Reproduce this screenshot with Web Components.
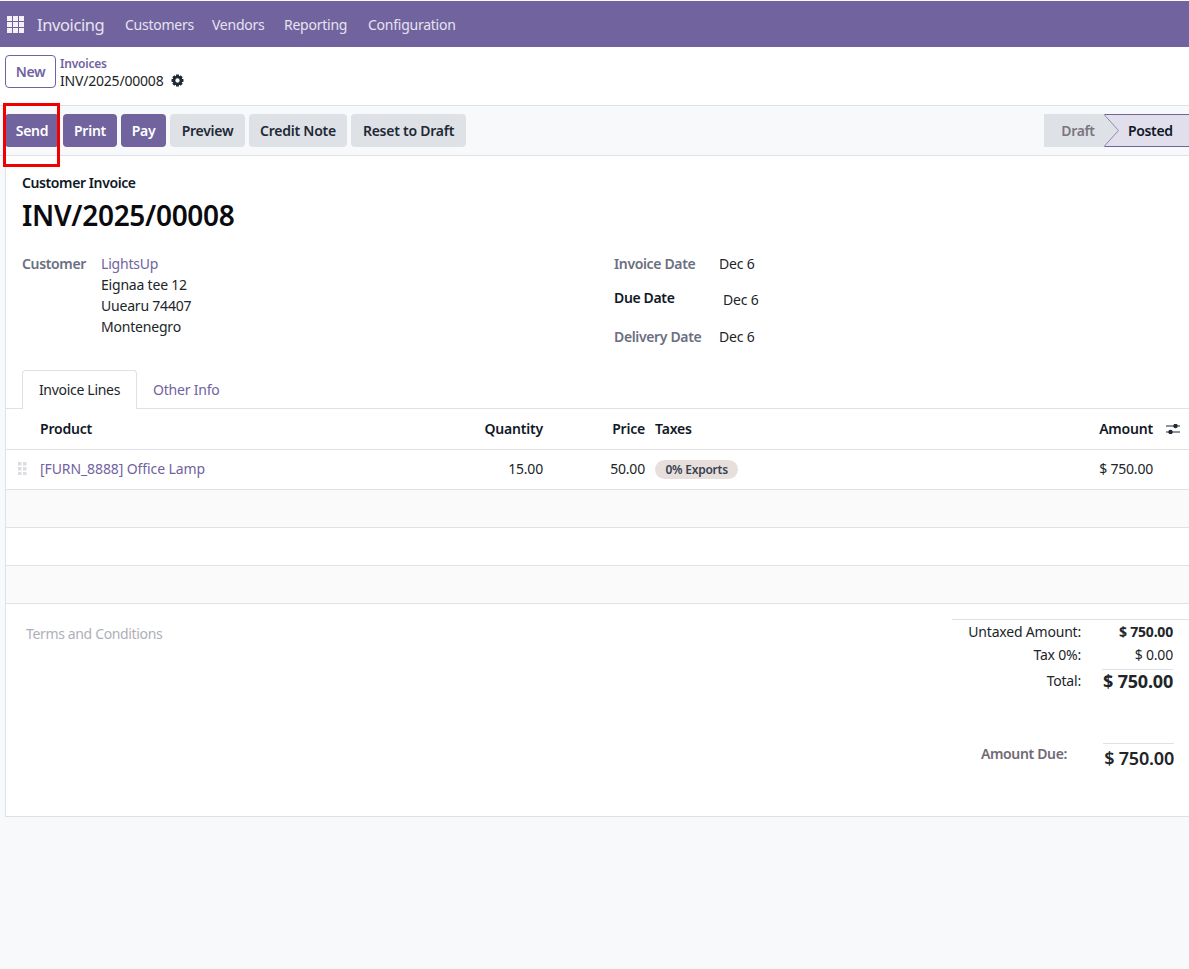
<!DOCTYPE html>
<html>
<head>
<meta charset="utf-8">
<title>Invoice</title>
<style>
    html, body { margin:0; padding:0; }
    body {
        background:#f8f9fa;
        color:#212529;
        font-family:"Noto Sans", "Open Sans", sans-serif;
        font-size:14px;
        letter-spacing:-0.2px;
    }
</style>
</head>
<body>
<app-navbar>
    <nav-item style="width:87px">Customers</nav-item>
    <nav-item style="width:72px">Vendors</nav-item>
    <nav-item style="width:84px">Reporting</nav-item>
    <nav-item>Configuration</nav-item>
</app-navbar>
<control-panel></control-panel>
<action-bar>
    <action-button kind="primary" style="width:54px">Send</action-button>
    <action-button kind="primary" style="width:54px">Print</action-button>
    <action-button kind="primary" style="width:45px">Pay</action-button>
    <action-button style="width:75px">Preview</action-button>
    <action-button style="width:98px">Credit Note</action-button>
    <action-button style="width:115px">Reset to Draft</action-button>
</action-bar>
<invoice-sheet>
    <invoice-header></invoice-header>
    <invoice-tabs></invoice-tabs>
    <invoice-lines></invoice-lines>
    <invoice-footer></invoice-footer>
</invoice-sheet>

<script>
class AppNavbar extends HTMLElement {
    constructor() {
        super();
        this.shadow = this.attachShadow({ mode: 'open' });
    }

    connectedCallback() {
        this.shadow.innerHTML = /*html*/`
            <style>
                :host {
                    display:flex;
                    align-items:center;
                    height:46px;
                    margin-top:1px;
                    background:#71639e;
                    color:#fff;
                }
                .apps { display:block; margin-left:7px; }
                .brand {
                    width:88px;
                    margin-left:13px;
                    font-size:16.5px;
                    letter-spacing:-0.4px;
                    color:#e6e3ef;
                }
            </style>
            <svg class="apps" width="17" height="17" viewBox="0 0 17 17" fill="#f3f1f7">
                <rect x="0" y="0" width="5" height="5"/><rect x="6" y="0" width="5" height="5"/><rect x="12" y="0" width="5" height="5"/>
                <rect x="0" y="6" width="5" height="5"/><rect x="6" y="6" width="5" height="5"/><rect x="12" y="6" width="5" height="5"/>
                <rect x="0" y="12" width="5" height="5"/><rect x="6" y="12" width="5" height="5"/><rect x="12" y="12" width="5" height="5"/>
            </svg>
            <span class="brand">Invoicing</span>
            <slot></slot>
        `;
    }
}

class NavItem extends HTMLElement {
    constructor() {
        super();
        this.shadow = this.attachShadow({ mode: 'open' });
    }

    connectedCallback() {
        this.shadow.innerHTML = /*html*/`
            <style>
                :host {
                    display:block;
                    color:#e6e3ef;
                    font-size:14px;
                    letter-spacing:-0.25px;
                }
            </style>
            <slot></slot>
        `;
    }
}

class ControlPanel extends HTMLElement {
    constructor() {
        super();
        this.shadow = this.attachShadow({ mode: 'open' });
    }

    connectedCallback() {
        this.shadow.innerHTML = /*html*/`
            <style>
                :host {
                    display:flex;
                    height:58px;
                    box-sizing:border-box;
                    padding:8px 0 0 5px;
                    background:#fff;
                }
                .new {
                    box-sizing:border-box;
                    width:51px;
                    height:33px;
                    display:flex;
                    align-items:center;
                    justify-content:center;
                    border:1px solid #71639e;
                    border-radius:4px;
                    color:#71639e;
                    font-weight:600;
                    letter-spacing:-0.3px;
                }
                .crumbs { margin-left:4px; padding-top:1px; }
                .parent {
                    color:#71639e;
                    font-size:12px;
                    font-weight:600;
                    line-height:16px;
                }
                .current {
                    display:flex;
                    align-items:center;
                    gap:8px;
                    line-height:21px;
                    margin-top:-2px;
                    color:#212529;
                }
            </style>
            <div class="new">New</div>
            <div class="crumbs">
                <div class="parent">Invoices</div>
                <div class="current">INV/2025/00008
                    <svg width="13" height="13" viewBox="0 0 24 24" fill="none" stroke="#1f2937">
                        <circle cx="12" cy="12" r="6.5" stroke-width="5"/>
                        <g stroke-width="5.5">
                            <path d="M12 1v4M12 19v4M1 12h4M19 12h4M4.2 4.2l2.8 2.8M17 17l2.8 2.8M4.2 19.8L7 17M17 7l2.8-2.8"/>
                        </g>
                    </svg>
                </div>
            </div>
        `;
    }
}

class ActionBar extends HTMLElement {
    constructor() {
        super();
        this.shadow = this.attachShadow({ mode: 'open' });
    }

    connectedCallback() {
        this.shadow.innerHTML = /*html*/`
            <style>
                :host {
                    display:flex;
                    position:relative;
                    align-items:center;
                    box-sizing:border-box;
                    height:51px;
                    padding-left:5px;
                    background:#f8f9fa;
                    border-top:1px solid #dee2e6;
                    border-bottom:1px solid #dee2e6;
                }
                .buttons { display:flex; gap:4px; flex:1; }
                .status { display:flex; height:33px; font-weight:600; }
                .draft {
                    width:60px;
                    display:flex;
                    align-items:center;
                    justify-content:center;
                    padding-left:8px;
                    box-sizing:border-box;
                    background:#dee2e6;
                    color:#7c7580;
                    letter-spacing:-0.35px;
                }
                .chevron { display:block; background:#e1dfeb; }
                .posted {
                    flex:none;
                    width:70px;
                    box-sizing:border-box;
                    display:flex;
                    align-items:center;
                    padding-left:9px;
                    background:#e1dfeb;
                    border-top:1px solid #71639e;
                    border-bottom:1px solid #71639e;
                    color:#111827;
                    letter-spacing:-0.35px;
                }
                .highlight {
                    position:absolute;
                    left:3px;
                    top:-3px;
                    width:57px;
                    height:64px;
                    box-sizing:border-box;
                    border:3px solid #f00000;
                }
            </style>
            <div class="buttons"><slot></slot></div>
            <div class="status">
                <div class="draft">Draft</div>
                <svg class="chevron" width="15" height="33" viewBox="0 0 15 33">
                    <path d="M0 .5H15M0 32.5H15" stroke="#71639e" stroke-width="1"/>
                    <path d="M0 0L15 16.5L0 33Z" fill="#dee2e6"/>
                    <path d="M0 0.5L14.5 16.5L0 32.5" fill="none" stroke="#8f86b5" stroke-width="1"/>
                </svg>
                <div class="posted">Posted</div>
            </div>
            <div class="highlight"></div>
        `;
    }
}

class ActionButton extends HTMLElement {
    constructor() {
        super();
        this.shadow = this.attachShadow({ mode: 'open' });
    }

    connectedCallback() {
        this.shadow.innerHTML = /*html*/`
            <style>
                :host {
                    display:flex;
                    align-items:center;
                    justify-content:center;
                    height:33px;
                    border-radius:4px;
                    background:#dee2e6;
                    color:#1f2937;
                    font-weight:600;
                    letter-spacing:-0.25px;
                }
                :host([kind="primary"]) {
                    background:#71639e;
                    color:#fff;
                }
            </style>
            <slot></slot>
        `;
    }
}

class InvoiceSheet extends HTMLElement {
    constructor() {
        super();
        this.shadow = this.attachShadow({ mode: 'open' });
    }

    connectedCallback() {
        this.shadow.innerHTML = /*html*/`
            <style>
                :host {
                    display:block;
                    box-sizing:border-box;
                    height:661px;
                    margin-left:5px;
                    background:#fff;
                    border-left:1px solid #dee2e6;
                    border-bottom:1px solid #dee2e6;
                }
            </style>
            <slot></slot>
        `;
    }
}

class InvoiceHeader extends HTMLElement {
    constructor() {
        super();
        this.shadow = this.attachShadow({ mode: 'open' });
    }

    connectedCallback() {
        this.shadow.innerHTML = /*html*/`
            <style>
                :host {
                    display:block;
                    height:214px;
                    box-sizing:border-box;
                    padding:17px 0 0 16px;
                    color:#212529;
                }
                .type { font-weight:600; line-height:20px; color:#111827; letter-spacing:-0.4px; }
                h1 {
                    margin:3px 0 0;
                    font-size:28px;
                    font-weight:600;
                    line-height:38px;
                    letter-spacing:-0.3px;
                    color:#0b0b0f;
                }
                .cols { display:grid; grid-template-columns:592px 1fr; margin-top:19px; }
                .customer { display:grid; grid-template-columns:79px 1fr; line-height:21px; }
                .label { color:#6b6f80; font-weight:600; letter-spacing:-0.35px; }
                a { color:#71639e; display:block; }
                .dates { display:grid; grid-template-columns:105px 1fr; padding-top:1px; }
                .dates div { height:34px; }
                .dates .mid { height:39px; }
                .dates .due { color:#111827; font-weight:600; letter-spacing:-0.35px; }
                .dates .due-value { padding:2px 0 0 4px; box-sizing:border-box; }
            </style>
            <div class="type">Customer Invoice</div>
            <h1>INV/2025/00008</h1>
            <div class="cols">
                <div class="customer">
                    <div class="label">Customer</div>
                    <div>
                        <a>LightsUp</a>
                        Eignaa tee 12<br>
                        Uuearu 74407<br>
                        Montenegro
                    </div>
                </div>
                <div class="dates">
                    <div class="label">Invoice Date</div><div>Dec 6</div>
                    <div class="due mid">Due Date</div><div class="due-value mid">Dec 6</div>
                    <div class="label">Delivery Date</div><div>Dec 6</div>
                </div>
            </div>
        `;
    }
}

class InvoiceTabs extends HTMLElement {
    constructor() {
        super();
        this.shadow = this.attachShadow({ mode: 'open' });
    }

    connectedCallback() {
        this.shadow.innerHTML = /*html*/`
            <style>
                :host {
                    display:flex;
                    height:39px;
                    box-sizing:border-box;
                    padding-left:16px;
                    border-bottom:1px solid #dee2e6;
                }
                .tab {
                    box-sizing:border-box;
                    height:39px;
                    display:flex;
                    align-items:center;
                    padding:0 16px;
                    color:#71639e;
                }
                .active {
                    width:115px;
                    justify-content:center;
                    padding:0 0 2px;
                    background:#fff;
                    color:#212529;
                    border:1px solid #dee2e6;
                    border-bottom:none;
                    border-radius:4px 4px 0 0;
                    letter-spacing:-0.3px;
                }
            </style>
            <div class="tab active">Invoice Lines</div>
            <div class="tab">Other Info</div>
        `;
    }
}

class InvoiceLines extends HTMLElement {
    constructor() {
        super();
        this.shadow = this.attachShadow({ mode: 'open' });
    }

    connectedCallback() {
        this.shadow.innerHTML = /*html*/`
            <style>
                :host { display:block; }
                .row {
                    display:grid;
                    grid-template-columns:34px 403px 100px 102px 10px 398px 100px 36px;
                    align-items:center;
                    box-sizing:border-box;
                    border-bottom:1px solid #dee2e6;
                }
                .head { height:41px; padding-bottom:2px; font-weight:600; color:#111827; }
                .line { height:40px; padding-bottom:2px; color:#212529; }
                .blank { height:38px; }
                .grey { background:#fafafa; }
                .num { text-align:right; }
                a { color:#71639e; letter-spacing:-0.1px; }
                .handle { display:block; margin-left:12px; }
                .opt { display:block; margin-left:13px; margin-top:2px; }
                .badge {
                    display:inline-block;
                    padding:0 10.5px;
                    border-radius:10px;
                    background:#e7dfdc;
                    color:#374151;
                    font-size:12px;
                    font-weight:600;
                    line-height:19px;
                    letter-spacing:-0.25px;
                }
            </style>
            <div class="row head">
                <span></span><span>Product</span>
                <span class="num">Quantity</span><span class="num">Price</span>
                <span></span><span>Taxes</span><span class="num">Amount</span>
                <svg class="opt" width="14" height="10" viewBox="0 0 14 10" fill="#1f2937">
                    <rect x="0" y="1.5" width="14" height="1"/><circle cx="9.5" cy="2" r="2.2"/>
                    <rect x="0" y="7.5" width="14" height="1"/><circle cx="4.5" cy="8" r="2.2"/>
                </svg>
            </div>
            <div class="row line">
                <svg class="handle" width="9" height="13" viewBox="0 0 9 13" fill="#dcdde2">
                    <rect x="0" y="0" width="3.5" height="3.5"/><rect x="5" y="0" width="3.5" height="3.5"/>
                    <rect x="0" y="5" width="3.5" height="3.5"/><rect x="5" y="5" width="3.5" height="3.5"/>
                    <rect x="0" y="10" width="3.5" height="3"/><rect x="5" y="10" width="3.5" height="3"/>
                </svg>
                <a>[FURN_8888] Office Lamp</a>
                <span class="num">15.00</span><span class="num">50.00</span>
                <span></span><span><span class="badge">0% Exports</span></span>
                <span class="num">$ 750.00</span><span></span>
            </div>
            <div class="row blank grey"></div>
            <div class="row blank"></div>
            <div class="row blank grey"></div>
        `;
    }
}

class InvoiceFooter extends HTMLElement {
    constructor() {
        super();
        this.shadow = this.attachShadow({ mode: 'open' });
    }

    connectedCallback() {
        this.shadow.innerHTML = /*html*/`
            <style>
                :host {
                    display:flex;
                    justify-content:space-between;
                    padding-top:15px;
                }
                .terms { margin:5px 0 0 20px; color:#adb0b8; line-height:20px; letter-spacing:-0.35px; }
                .totals { width:237px; border-top:1px solid #dee2e6; }
                .grid {
                    display:grid;
                    grid-template-columns:129px 92px;
                    text-align:right;
                    line-height:23px;
                    color:#212529;
                }
                .strong { font-weight:700; }
                .sum {
                    grid-column:2;
                    justify-self:end;
                    border-top:1px solid #dee2e6;
                    font-size:18px;
                    line-height:23px;
                    margin-top:3px;
                    width:71px;
                    white-space:nowrap;
                }
                .total-label { grid-column:1; margin-top:3px; }
                .due {
                    display:grid;
                    grid-template-columns:115px 107px;
                    margin-top:50px;
                    text-align:right;
                    line-height:22px;
                }
                .due .label { color:#6f6a75; font-weight:600; letter-spacing:-0.35px; }
                .due .value {
                    justify-self:end;
                    width:71px;
                    border-top:1px solid #dee2e6;
                    font-size:18px;
                    font-weight:600;
                    line-height:28px;
                    white-space:nowrap;
                }
            </style>
            <div class="terms">Terms and Conditions</div>
            <div class="totals">
                <div class="grid">
                    <span>Untaxed Amount:</span><span class="strong">$ 750.00</span>
                    <span>Tax 0%:</span><span>$ 0.00</span>
                    <span class="total-label">Total:</span><span class="sum strong">$ 750.00</span>
                </div>
                <div class="due">
                    <span class="label">Amount Due:</span><span class="value">$ 750.00</span>
                </div>
            </div>
        `;
    }
}

customElements.define('app-navbar', AppNavbar);
customElements.define('nav-item', NavItem);
customElements.define('control-panel', ControlPanel);
customElements.define('action-bar', ActionBar);
customElements.define('action-button', ActionButton);
customElements.define('invoice-sheet', InvoiceSheet);
customElements.define('invoice-header', InvoiceHeader);
customElements.define('invoice-tabs', InvoiceTabs);
customElements.define('invoice-lines', InvoiceLines);
customElements.define('invoice-footer', InvoiceFooter);
</script>
</body>
</html>
